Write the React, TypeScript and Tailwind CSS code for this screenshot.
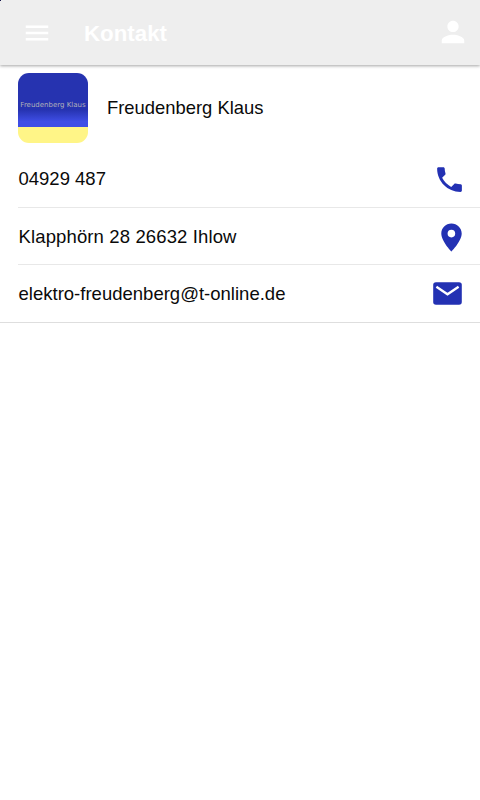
import React from 'react';
import { IoMdCall, IoMdMenu, IoMdPerson } from 'react-icons/io';

const PinIcon: React.FC = () => (
    <svg viewBox="0 0 21 29" className="w-[21px] h-[29px] mt-0.5 block" fill="currentColor">
        <path
            fillRule="evenodd"
            d="M10.4.5C4.7.5.3 5 .3 10.5c0 7.7 10.1 18 10.1 18s10.3-10.3 10.3-18C20.7 5 16.1.5 10.4.5Zm0 6.3a3.8 3.8 0 1 1 0 7.6 3.8 3.8 0 0 1 0-7.6Z"
        />
    </svg>
);

const MailIcon: React.FC = () => (
    <svg viewBox="0 0 29 23" className="w-[29px] h-[23px] block">
        <rect x="0.2" y="0.3" width="28.6" height="22.5" rx="2.8" fill="currentColor" />
        <path d="M3.4 4.7 14.5 12.3 25.6 4.7" fill="none" stroke="white" strokeWidth="2.3" />
    </svg>
);

const CONTACT_ROWS = [
    { text: '04929 487', textClass: '', icon: <IoMdCall className="w-[33px] h-[33px] -mr-1" /> },
    { text: 'Klapphörn 28 26632 Ihlow', textClass: 'tracking-[0.13px] pt-px', icon: <PinIcon /> },
    { text: 'elektro-freudenberg@t-online.de', textClass: 'tracking-[0.01px]', icon: <MailIcon /> },
];

const Header: React.FC = () => (
    <header className="relative h-[65px] flex items-center bg-[#eeeeee] text-white pl-[22px] pr-3 shadow-[0_1px_3px_rgba(0,0,0,0.36)]">
        <span className="absolute left-0 top-0 w-px h-px bg-[#15154a]" />
        <IoMdMenu className="w-[30px] h-[30px]" />
        <h1 className="ml-8 mt-0.5 text-[22.3px] font-bold">Kontakt</h1>
        <IoMdPerson className="ml-auto mb-0.5 w-[30px] h-[30px]" />
    </header>
);

const Logo: React.FC = () => (
    <div className="w-[70px] h-[70px] rounded-[11px] overflow-hidden flex flex-col">
        <div className="h-[54px] pt-[29px] bg-linear-to-b from-[#2633b0] from-68% to-[#3f4ee6] to-90% text-center text-[7px] leading-none text-[#b0b0b8] whitespace-nowrap font-['DejaVu_Sans',sans-serif]">
            Freudenberg Klaus
        </div>
        <div className="flex-1 bg-[#fff587]" />
    </div>
);

export default function App() {
    return (
        <div className="w-full h-[800px] bg-white text-[#0a0a0a] font-['Liberation_Sans',sans-serif] overflow-hidden">
            <Header />
            <main className="border-b border-[#dedede]">
                <div className="h-[86px] pl-[18px] pb-[0.5px] flex items-center gap-[19px]">
                    <Logo />
                    <span className="text-[18.4px]">Freudenberg Klaus</span>
                </div>
                <ul className="pl-[18px]">
                    {CONTACT_ROWS.map((row) => (
                        <li key={row.text} className="h-[57px] pr-[18px] flex items-center justify-between border-b border-[#e8e8e8] last:border-b-0">
                            <span className={`pl-[0.5px] text-[18.5px] ${row.textClass}`}>{row.text}</span>
                            <span className="text-[#2331b3]">{row.icon}</span>
                        </li>
                    ))}
                </ul>
            </main>
        </div>
    );
}
